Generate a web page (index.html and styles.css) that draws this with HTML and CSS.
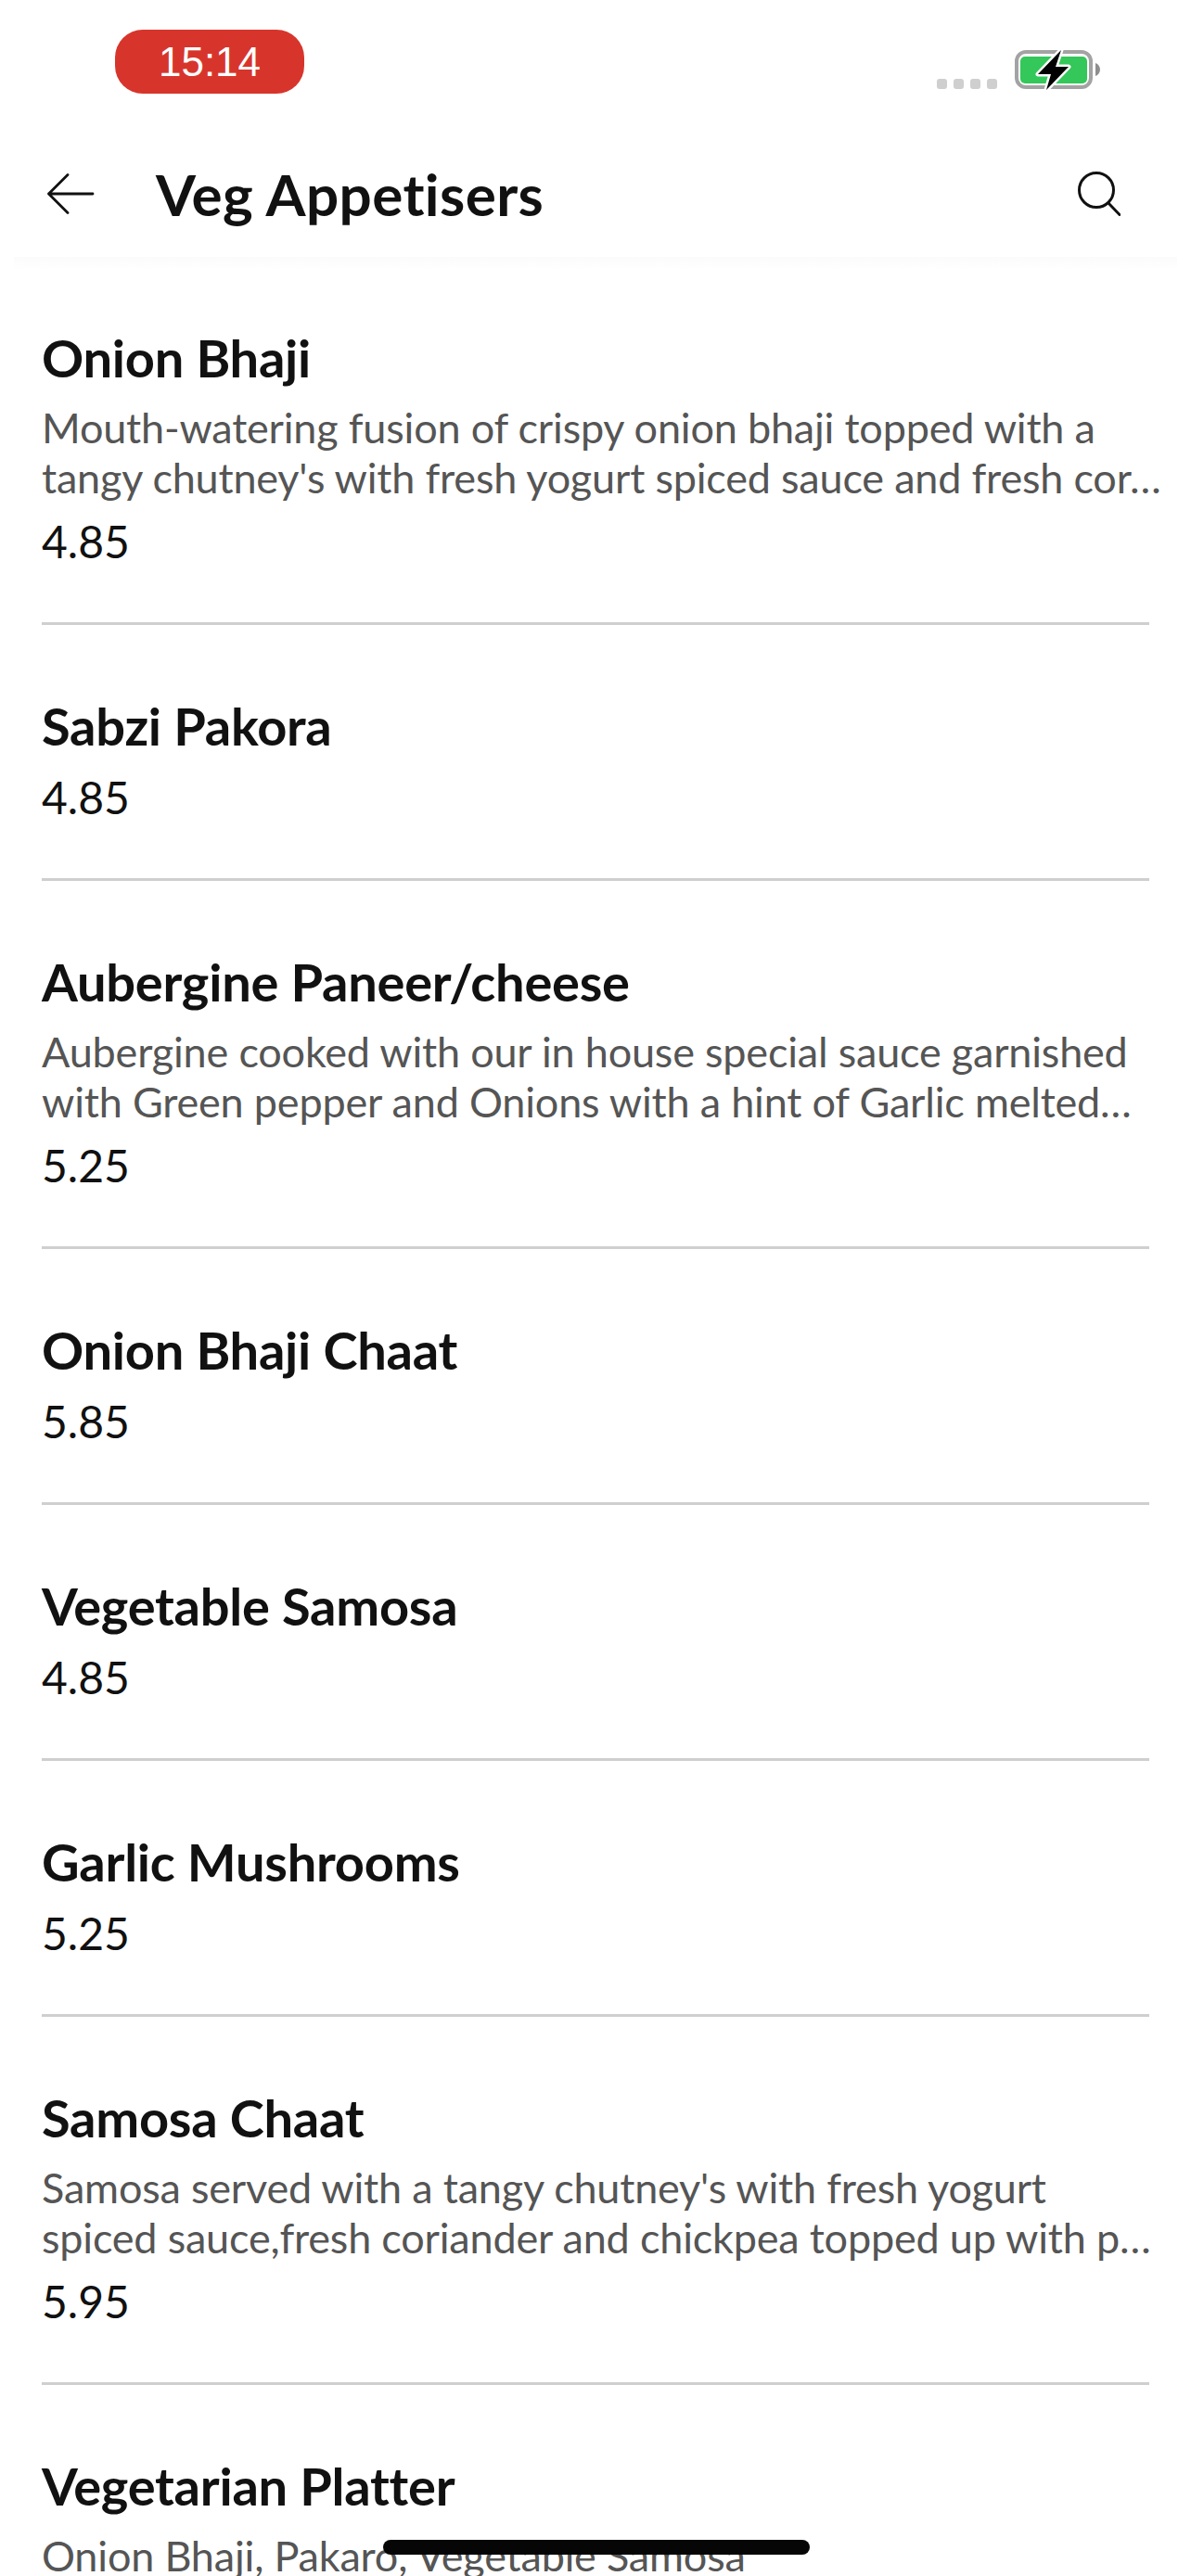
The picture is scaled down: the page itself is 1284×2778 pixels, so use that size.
FILE: index.html
```html
<!DOCTYPE html>
<html lang="en">
<head>
<meta charset="utf-8">
<title>Veg Appetisers</title>
<link rel="stylesheet" href="styles.css">
</head>
<body>
<div class="screen">
  <header class="top">
    <div class="status">
      <div class="pill">15:14</div>
      <div class="status-right">
        <div class="dots"><i></i><i></i><i></i><i></i></div>
        <svg class="battery" width="96" height="46" viewBox="0 0 96 46">
          <rect x="4" y="4" width="80" height="38" rx="10" fill="none" stroke="#a3a3a3" stroke-width="4"/>
          <rect x="8" y="9" width="72" height="29" rx="5" fill="#34c759"/>
          <path d="M89 16c3 1 5 4 5 7s-2 6-5 7z" fill="#8e8e8e"/>
          <path d="M52 2 L27 28 H41 L36 45 L60 20 H46 Z" fill="#000" stroke="#fff" stroke-width="5" stroke-linejoin="round" paint-order="stroke"/>
        </svg>
      </div>
    </div>
    <div class="bar">
      <svg class="back" width="51" height="44" viewBox="0 0 51 44"><path d="M22 1.500 L1.500 22 L22 42.500 M1.500 22 H49" fill="none" stroke="#111" stroke-width="2.800" stroke-linecap="round" stroke-linejoin="round"/></svg>
      <h1 class="title">Veg Appetisers</h1>
      <svg class="search" width="46" height="48" viewBox="0 0 46 48"><circle cx="20" cy="20" r="18.500" fill="none" stroke="#111" stroke-width="3"/><path d="M33 34 L45 46.500" stroke="#111" stroke-width="3" stroke-linecap="round"/></svg>
    </div>
  </header>
  <main class="list">
    <article class="item">
      <h2 class="name">Onion Bhaji</h2>
      <p class="desc">Mouth-watering fusion of crispy onion bhaji topped with a<br>tangy chutney's with fresh yogurt spiced sauce and fresh cor…</p>
      <div class="price">4.85</div>
    </article>
    <article class="item">
      <h2 class="name">Sabzi Pakora</h2>
      <div class="price">4.85</div>
    </article>
    <article class="item">
      <h2 class="name">Aubergine Paneer/cheese</h2>
      <p class="desc">Aubergine cooked with our in house special sauce garnished<br>with Green pepper and Onions with a hint of Garlic melted…</p>
      <div class="price">5.25</div>
    </article>
    <article class="item">
      <h2 class="name">Onion Bhaji Chaat</h2>
      <div class="price">5.85</div>
    </article>
    <article class="item">
      <h2 class="name">Vegetable Samosa</h2>
      <div class="price">4.85</div>
    </article>
    <article class="item">
      <h2 class="name">Garlic Mushrooms</h2>
      <div class="price">5.25</div>
    </article>
    <article class="item">
      <h2 class="name">Samosa Chaat</h2>
      <p class="desc">Samosa served with a tangy chutney's with fresh yogurt<br>spiced sauce,fresh coriander and chickpea topped up with p…</p>
      <div class="price">5.95</div>
    </article>
    <article class="item">
      <h2 class="name">Vegetarian Platter</h2>
      <p class="desc">Onion Bhaji, Pakaro, Vegetable Samosa</p>
    </article>
  </main>
  <div class="home"></div>
</div>
</body>
</html>
```
FILE: styles.css
```css
* { box-sizing: border-box; }
html, body { margin: 0; padding: 0; background: #fff; }
.screen { position: relative; width: 1284px; height: 2778px; overflow: hidden; background: #fff; font-family: Lato, sans-serif; font-variant-ligatures: none; color: #111; }
.top { height: 277px; display: flex; flex-direction: column; }
.status { height: 141px; display: flex; align-items: flex-start; justify-content: space-between; padding: 32px 0 0 124px; }
.pill { width: 204px; height: 69px; border-radius: 30px; background: #d7352c; color: #fff; font-family: "Liberation Sans", sans-serif; font-size: 44px; line-height: 69px; text-align: center; }
.status-right { display: flex; align-items: flex-end; gap: 17px; padding: 20px 96px 0 0; }
.dots { display: flex; gap: 7px; padding-bottom: 2px; }
.dots i { display: block; width: 11px; height: 11px; border-radius: 3px; background: #cfcfcf; }
.bar { display: flex; align-items: center; height: 136px; padding-left: 51px; }
.back { flex: none; margin-right: 66px; }
.title { flex: 1; margin: 0; font-size: 62px; font-weight: 700; line-height: 72px; letter-spacing: 0.4px; }
.search { flex: none; margin-right: 76px; }
.list { padding: 0 45px; background: linear-gradient(#fbfbfb, #fff) no-repeat center top / calc(100% - 30px) 14px; }
.item { padding: 77px 0 59px; border-bottom: 3px solid #cfcfcf; }
.name { margin: 0 0 17px; font-size: 56px; line-height: 64px; font-weight: 700; letter-spacing: -0.25px; }
.desc { margin: -1px 0 14px; font-size: 45px; line-height: 54px; color: #555; white-space: nowrap; letter-spacing: -0.2px; }
.price { font-size: 48px; line-height: 56px; }
.home { position: absolute; left: 413px; top: 2739px; width: 460px; height: 16px; border-radius: 8px; background: #060606; }
```
